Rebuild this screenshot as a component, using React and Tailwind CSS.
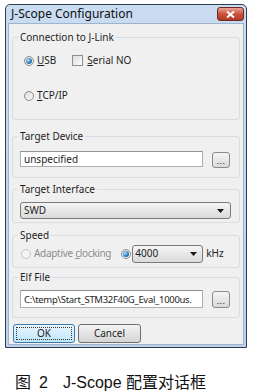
import React from 'react';

function Radio({ checked, disabled }) {
  return (
    <span
      className={`flex h-[10px] w-[10px] shrink-0 items-center justify-center rounded-full border ${
        disabled ? 'border-[#c4c4c4] bg-[#f3f3f3]' : 'border-[#8b8d8f] bg-linear-to-br from-[#dcdcdc] to-[#fbfbfb]'
      }`}
    >
      {checked && (
        <span className="h-[6px] w-[6px] rounded-full bg-[radial-gradient(circle_at_35%_35%,#b6e3fb,#2a7fc4_55%,#0c3a6c)]" />
      )}
    </span>
  );
}

function Checkbox() {
  return <span className="block h-[11px] w-[11px] shrink-0 border border-[#8f8f8f] bg-linear-to-br from-[#dedede] to-[#fbfbfb]" />;
}

function Arrow() {
  return (
    <svg width="7" height="4" viewBox="0 0 7 4" className="shrink-0">
      <polygon points="0,0 7,0 3.5,4" fill="#1a1a1a" />
    </svg>
  );
}

function DotsButton({ className }) {
  return (
    <div
      className={`flex w-[18px] items-end justify-center rounded-[3px] border border-[#8a8a8a] bg-linear-to-b from-[#f6f6f6] to-[#d9d9d9] pb-[3px] ${className}`}
    >
      <span className="text-[9px] leading-[6px] tracking-[0.5px] text-[#222]">...</span>
    </div>
  );
}

function Group({ label, className, children }) {
  return (
    <fieldset className={`w-[228px] rounded-[3px] border border-[#d6dce2] ${className}`}>
      <legend className="ml-[5px] px-[2px] leading-[13px] text-[#1e1e1e]">{label}</legend>
      {children}
    </fieldset>
  );
}

export default function App() {
  return (
    <div className="h-[391px] w-[253px] overflow-hidden bg-white pl-[5px] pt-[4px] font-['Noto_Sans',sans-serif]">
      {/* dialog window */}
      <div className="flex h-[344px] w-[242px] flex-col rounded-t-[5px] border border-[#2f3d4f] bg-linear-to-b from-[#c9dcf1] to-[#bcd2ea]">
        <div className="flex h-[18px] shrink-0 items-start justify-between">
          <span className="pl-[5px] pt-[2px] text-[12px] leading-[14px] text-[#111]">J-Scope Configuration</span>
          <div className="mr-[2px] mt-[2px] flex h-[14px] w-[27px] items-center justify-center rounded-[3px] border border-[#6d2a24] bg-linear-to-b from-[#e8a493] via-[#c9503b] to-[#b23a28]">
            <svg width="9" height="7" viewBox="0 0 9 7">
              <path d="M1 0.5 L8 6.5 M8 0.5 L1 6.5" stroke="#fff" strokeWidth="2" />
            </svg>
          </div>
        </div>

        <div className="mx-[2px] mb-[2px] flex-1 border border-[#9fb4cc] bg-[#f0f0f0] pl-[3px] pt-[7px] text-[10px] text-[#1e1e1e]">
          <Group label="Connection to J-Link" className="pb-[17px]">
            <div className="mt-[10px] flex h-[13px] items-center pl-[11px]">
              <Radio checked />
              <span className="ml-[3px] leading-[13px]">
                <u>U</u>SB
              </span>
              <span className="ml-[16px]">
                <Checkbox />
              </span>
              <span className="ml-[4px] leading-[13px]">
                <u>S</u>erial NO
              </span>
            </div>
            <div className="mt-[22px] flex h-[13px] items-center pl-[11px]">
              <Radio />
              <span className="ml-[3px] leading-[13px]">
                <u>T</u>CP/IP
              </span>
            </div>
          </Group>

          <Group label="Target Device" className="mt-[10px] pb-[9px]">
            <div className="mt-[8px] flex pl-[7px]">
              <div className="flex h-[16px] w-[183px] items-center border border-[#abadb3] border-t-[#8e9097] bg-white pl-[3px] leading-[13px]">
                unspecified
              </div>
              <DotsButton className="ml-[9px] mt-[1px] h-[16px]" />
            </div>
          </Group>

          <Group label="Target Interface" className="mt-[5px] pb-[3px]">
            <div className="ml-[7px] mt-[6px] flex h-[17px] w-[211px] items-center justify-between rounded-[3px] border border-[#7a7a7a] bg-linear-to-b from-[#f5f5f5] to-[#dadada] pl-[3px] pr-[6px]">
              <span className="leading-[13px]">SWD</span>
              <Arrow />
            </div>
          </Group>

          <Group label="Speed" className="mt-[6px] pb-[4px]">
            <div className="mt-[2px] flex h-[19px] items-center whitespace-nowrap pl-[8px]">
              <Radio disabled />
              <span className="ml-[3px] leading-[13px] tracking-[-0.3px] text-[#8d8d8d]">
                Adaptive <u>c</u>locking
              </span>
              <span className="ml-[10px]">
                <Radio checked />
              </span>
              <div className="ml-[1px] flex h-[18px] w-[71px] items-center justify-between rounded-[3px] border border-[#7a7a7a] bg-linear-to-b from-[#f5f5f5] to-[#dadada] pl-[2px] pr-[5px]">
                <span className="leading-[13px]">4000</span>
                <Arrow />
              </div>
              <span className="ml-[3px] leading-[13px]">kHz</span>
            </div>
          </Group>

          <Group label="Elf File" className="mt-[3px] pb-[9px]">
            <div className="mt-[6px] flex pl-[7px]">
              <div className="flex h-[18px] w-[183px] items-center overflow-hidden whitespace-nowrap border border-[#abadb3] border-t-[#8e9097] bg-white pl-[3px] text-[9.5px] leading-[13px] tracking-[-0.3px]">
                C:\temp\Start_STM32F40G_Eval_1000us.
              </div>
              <DotsButton className="ml-[9px] mt-[1px] h-[17px]" />
            </div>
          </Group>

          <div className="mt-[6px] flex gap-[3px] pl-[1px]">
            <div className="flex h-[19px] w-[62px] items-center justify-center rounded-[3px] border border-[#3d7bad] bg-linear-to-b from-[#eaf6fd] to-[#bee6fd] p-[2px]">
              <div className="flex h-full w-full items-center justify-center border border-dotted border-[#333] leading-[13px]">
                OK
              </div>
            </div>
            <div className="flex h-[19px] w-[63px] items-center justify-center rounded-[3px] border border-[#707070] bg-linear-to-b from-[#f4f4f4] to-[#d5d5d5] leading-[13px]">
              Cancel
            </div>
          </div>
        </div>
      </div>

      {/* figure caption */}
      <div className="mt-[26px] flex items-center pl-[10px] font-['Liberation_Sans','Noto_Sans_CJK_SC',sans-serif] text-[16px] leading-[18px] text-[#111]">
        <span>图</span>
        <span className="ml-[8px]">2</span>
        <span className="ml-[15px]">J-Scope 配置对话框</span>
      </div>
    </div>
  );
}
